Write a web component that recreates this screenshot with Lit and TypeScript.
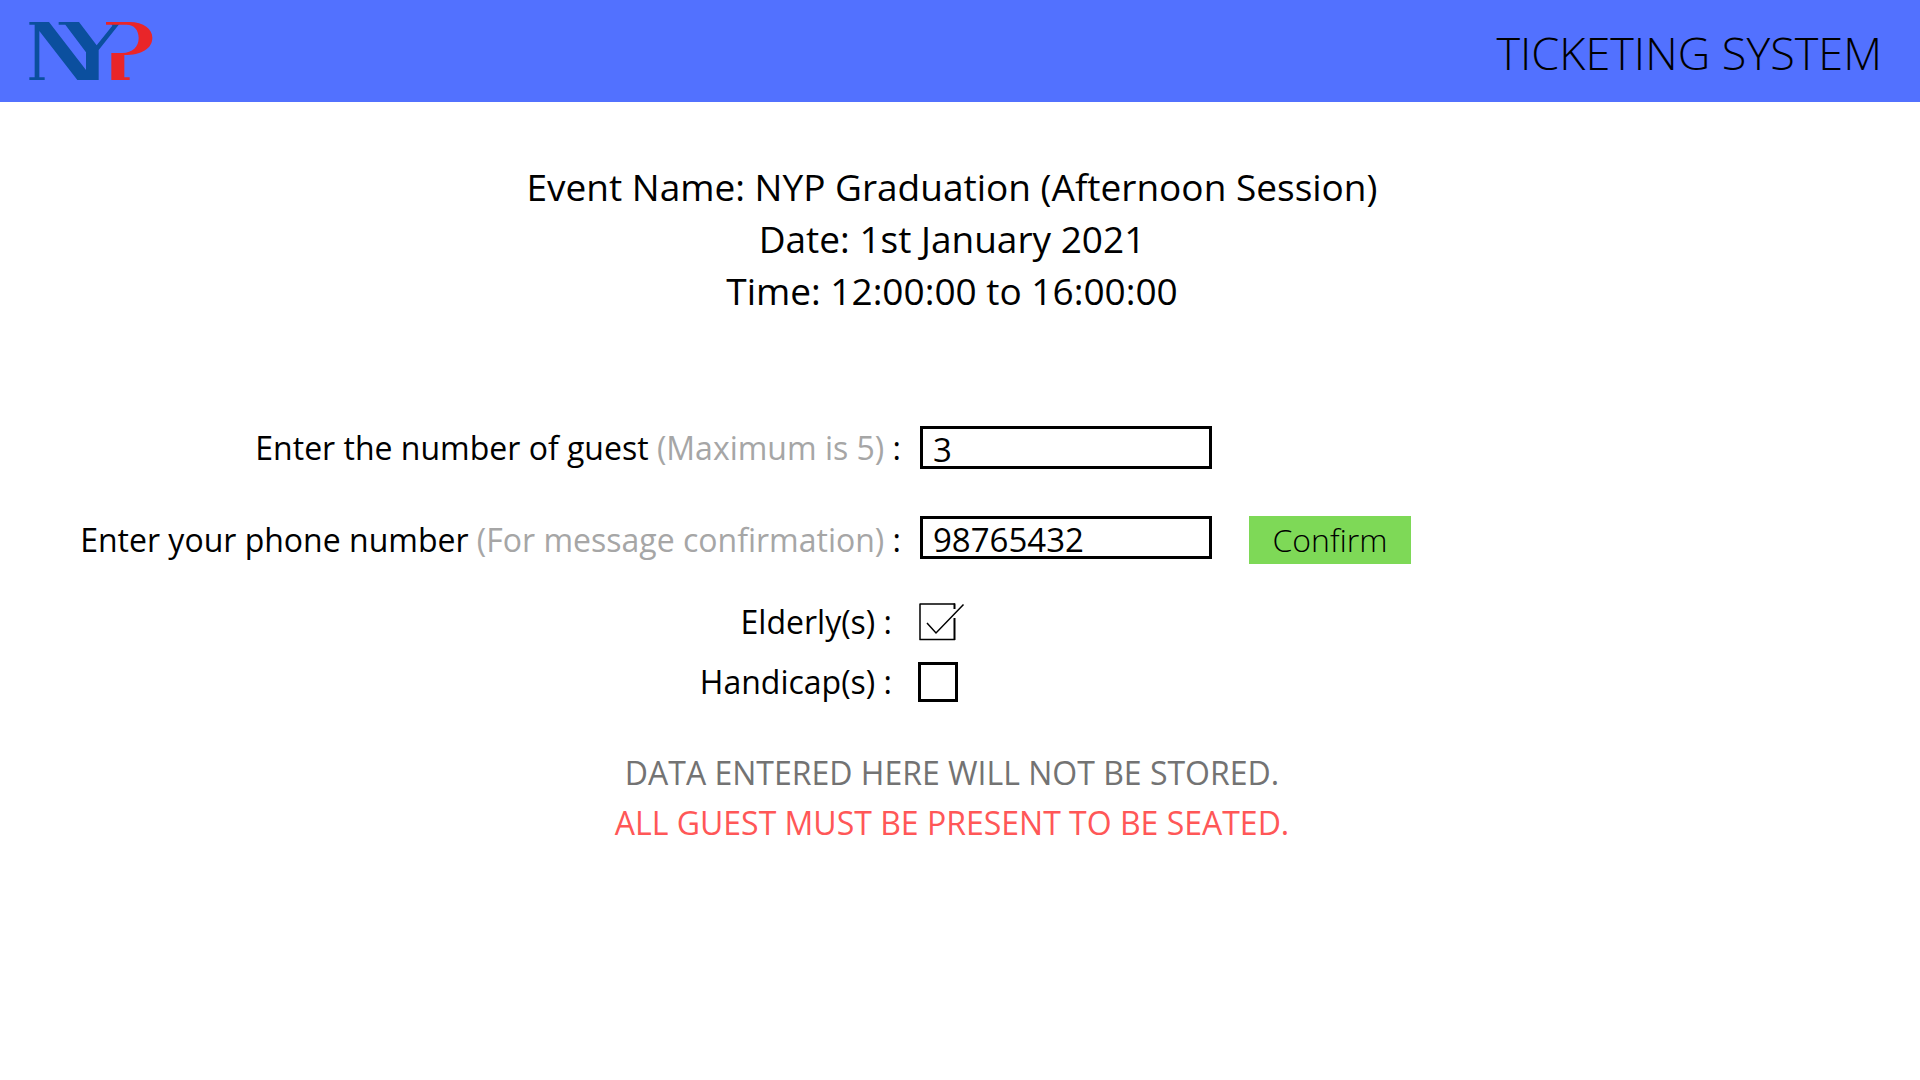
import { LitElement, html, css, svg } from "lit";
import { customElement, state } from "lit/decorators.js";

const logo = html`<svg class="logo" viewBox="81 57 378 189" role="img" aria-label="NYP">
  ${svg`
    <path fill="#0b4f9e" d="M88 66H147L258 210V157L196 74H176V66H237L290 136L337 77L334 72H358L296 150V240H232L118 93V232H134V240H88V232H104V74H88Z"/>
    <path fill="#e92529" d="M318 66H388C432 66 457 88 457 113C457 146 424 165 373 165V232H389V240H334V159H366C398 159 416 140 416 114C416 90 402 74 380 74H318Z"/>
  `}
</svg>`;

@customElement("app-root")
export class AppRoot extends LitElement {
  @state() private guests = "3";
  @state() private phone = "98765432";
  @state() private elderly = true;
  @state() private handicap = false;

  static styles = css`
    :host {
      display: block;
      min-height: 100vh;
      background: #fff;
      color: #000;
      font-family: "Open Sans", "Noto Sans", sans-serif;
      font-size: 32px;
      line-height: 40px;
    }
    * {
      box-sizing: border-box;
    }
    .bar {
      display: flex;
      align-items: flex-start;
      justify-content: space-between;
      padding: 19px 38px 16px 27px;
      background: #5271ff;
    }
    .logo {
      display: block;
      width: 126px;
      height: 63px;
    }
    .title {
      margin: 0;
      font-size: 45px;
      line-height: 67px;
      font-weight: 300;
    }
    .event {
      padding: 59px 16px 0 0;
      text-align: center;
      font-size: 37px;
      line-height: 52px;
    }
    .event p,
    .notes p {
      margin: 0;
    }
    .fields,
    .checks {
      display: grid;
      grid-template-columns: 1fr 1fr;
      align-items: center;
    }
    .fields {
      padding: 109px 80px 0 0;
      row-gap: 47px;
    }
    .checks {
      padding: 38px 84px 0 0;
      row-gap: 20px;
    }
    .label {
      justify-self: end;
      white-space: nowrap;
    }
    .fields .label {
      padding-right: 19px;
    }
    .checks .label {
      padding-right: 26px;
    }
    .hint {
      color: #a6a6a6;
    }
    .control {
      display: flex;
      align-items: flex-start;
      gap: 37px;
    }
    .box {
      width: 292px;
      height: 43px;
      margin: 0;
      padding: 4px 10px 0;
      border: 3px solid #000;
      border-radius: 0;
      background: #fff;
      color: inherit;
      font: inherit;
      font-size: 33px;
      line-height: 33px;
      outline: none;
    }
    .confirm {
      width: 162px;
      height: 48px;
      padding: 0;
      border: 0;
      background: #7ed957;
      color: inherit;
      font: inherit;
      font-weight: 300;
      cursor: pointer;
    }
    .check {
      display: grid;
      width: 48px;
      height: 40px;
    }
    .check > * {
      grid-area: 1 / 1;
    }
    .tick {
      appearance: none;
      width: 40px;
      height: 40px;
      margin: 0;
      border: 3px solid #000;
      background: #fff;
    }
    .tick:checked {
      border: 0;
    }
    .mark {
      display: none;
      width: 48px;
      height: 40px;
      pointer-events: none;
      fill: none;
      stroke: #000;
    }
    .tick:checked + .mark {
      display: block;
    }
    .notes {
      padding: 46px 16px 0 0;
      text-align: center;
      line-height: 50px;
      color: #737373;
    }
    .notes .warning {
      color: #ff5757;
    }
  `;

  private renderCheck(id: string, label: string, checked: boolean, set: (v: boolean) => void) {
    return html`
      <label class="label" for=${id}>${label} :</label>
      <span class="check">
        <input
          class="tick"
          id=${id}
          type="checkbox"
          .checked=${checked}
          @change=${(e: Event) => set((e.target as HTMLInputElement).checked)}
        />
        <svg class="mark" viewBox="0 0 48 40" aria-hidden="true">
          <path stroke-width="1.5" d="M1.5 2H37M1.5 37.5H37M2 2V38" />
          <path stroke-width="2" d="M36.5 1.5V7M36.5 16V38" />
          <path stroke-width="1.5" d="M9 21L18 31L45.500 2.500" />
        </svg>
      </span>
    `;
  }

  render() {
    return html`
      <header class="bar">
        ${logo}
        <h1 class="title">TICKETING SYSTEM</h1>
      </header>
      <main>
        <section class="event">
          <p>Event Name: NYP Graduation (Afternoon Session)</p>
          <p>Date: 1st January 2021</p>
          <p>Time: 12:00:00 to 16:00:00</p>
        </section>
        <form @submit=${(e: Event) => e.preventDefault()}>
          <div class="fields">
            <label class="label" for="guests">Enter the number of guest <span class="hint">(Maximum is 5)</span> :</label>
            <div class="control">
              <input class="box" id="guests" type="text" inputmode="numeric" .value=${this.guests}
                @input=${(e: Event) => (this.guests = (e.target as HTMLInputElement).value)} />
            </div>
            <label class="label" for="phone">Enter your phone number <span class="hint">(For message confirmation)</span> :</label>
            <div class="control">
              <input class="box" id="phone" type="tel" .value=${this.phone}
                @input=${(e: Event) => (this.phone = (e.target as HTMLInputElement).value)} />
              <button class="confirm" type="submit">Confirm</button>
            </div>
          </div>
          <div class="checks">
            ${this.renderCheck("elderly", "Elderly(s)", this.elderly, (v) => (this.elderly = v))}
            ${this.renderCheck("handicap", "Handicap(s)", this.handicap, (v) => (this.handicap = v))}
          </div>
        </form>
        <section class="notes">
          <p>DATA ENTERED HERE WILL NOT BE STORED.</p>
          <p class="warning">ALL GUEST MUST BE PRESENT TO BE SEATED.</p>
        </section>
      </main>
    `;
  }
}
